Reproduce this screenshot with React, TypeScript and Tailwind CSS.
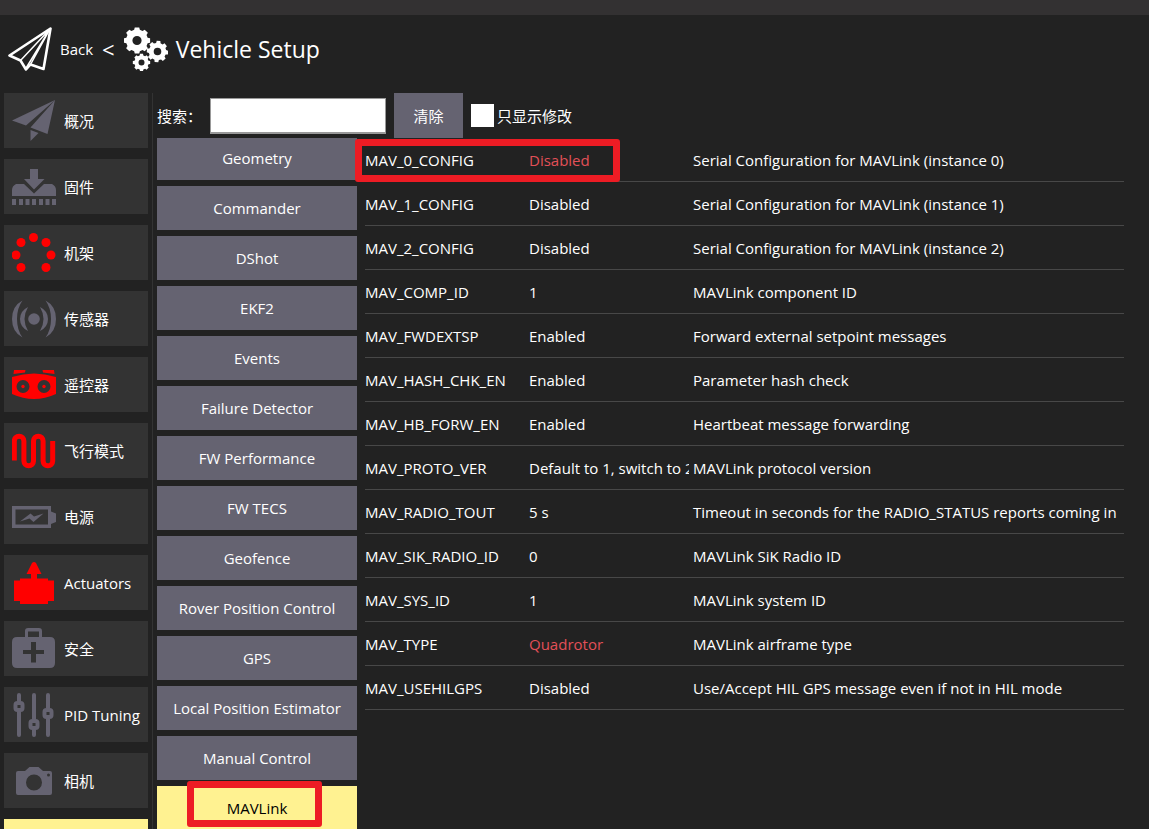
import React from "react";

const GREY = "#656371";
const RED = "#ff0000";

function gearPath(cx: number, cy: number, outer: number, inner: number, hole: number, turn: number) {
  const pts: string[] = [];
  for (let i = 0; i < 8; i++) {
    const steps: [number, number][] = [
      [-0.26, inner],
      [-0.17, outer],
      [0.17, outer],
      [0.26, inner],
    ];
    for (const [d, r] of steps) {
      const a = turn + (i * Math.PI) / 4 + d;
      pts.push(`${(cx + r * Math.cos(a)).toFixed(2)} ${(cy + r * Math.sin(a)).toFixed(2)}`);
    }
  }
  return `M${pts.join("L")}ZM${cx - hole} ${cy}a${hole} ${hole} 0 1 0 ${hole * 2} 0a${hole} ${hole} 0 1 0 ${-hole * 2} 0Z`;
}

function Icon({ children }: { children: React.ReactNode }) {
  return (
    <svg viewBox="0 0 44 44" className="size-11 shrink-0" aria-hidden="true">
      {children}
    </svg>
  );
}

const PlaneOutline = () => (
  <Icon>
    <g fill="none" stroke="#fff" strokeLinejoin="round">
      <path d="M42.5 1.5L1.5 28.5L12.5 33.5L18 42.5L22.5 37.5L35.5 42Z" strokeWidth="2.6" />
      <path d="M42 2L12.500 33.500M42 2L17.500 42M42 2L22.500 37.500" strokeWidth="1.5" />
    </g>
  </Icon>
);

const Gears = () => (
  <Icon>
    <g fill="#fff" fillRule="evenodd">
      <path d={gearPath(13, 13.5, 13.3, 11, 4.6, 0)} />
      <path d={gearPath(33.5, 24.5, 10.8, 8.7, 3.8, 0.1)} />
      <path d={gearPath(17.5, 35.5, 8.8, 7.2, 3, 0)} />
    </g>
  </Icon>
);

const icons: Record<string, React.ReactNode> = {
  summary: (
    <Icon>
      <path fill={GREY} d="M43 1L0 21.500L14 26.500ZM43 1L18.500 28.500L35.500 35ZM18.500 31L26.500 34L18.500 42Z" />
    </Icon>
  ),
  firmware: (
    <Icon>
      <path
        fill={GREY}
        d="M18 4h8v10h6.500L22 24.500L12 14h6ZM4 19h8l10 9.500L32 19h8q4 2 4 6v6H0v-6q0-4 4-6ZM0 34h4v6H0ZM7 34h4v6H7ZM13.500 34h4v6h-4ZM20 34h4v6h-4ZM27 34h4v6h-4ZM33.500 34h4v6h-4ZM40 34h4v6h-4Z"
      />
    </Icon>
  ),
  airframe: (
    <Icon>
      <g fill={RED}>
        <circle cx="21.5" cy="6.5" r="4.5" />
        <circle cx="9" cy="11.5" r="4.5" />
        <circle cx="34" cy="11.5" r="4.5" />
        <circle cx="4" cy="24" r="4.5" />
        <circle cx="39" cy="24" r="4.5" />
        <circle cx="9" cy="36.5" r="4.5" />
        <circle cx="34" cy="36.5" r="4.5" />
      </g>
    </Icon>
  ),
  sensors: (
    <Icon>
      <g fill={GREY}>
        <circle cx="22" cy="22" r="5.8" />
        <path d="M10.500 3.500Q0 9 0 22T10.500 40.500Q5 33 5 22T10.500 3.500ZM33.500 3.500Q44 9 44 22T33.500 40.500Q39 33 39 22T33.500 3.500ZM16 10Q8 14 8 22T16 34Q12.500 28 12.500 22T16 10ZM28 10Q36 14 36 22T28 34Q31.500 28 31.500 22T28 10Z" />
      </g>
    </Icon>
  ),
  radio: (
    <Icon>
      <g fill={RED}>
        <path d="M2 7h11.500l-.5 2.500L1.500 11ZM30.500 7H42l.5 4L31 9.500Z" />
        <path
          fillRule="evenodd"
          d="M0 14Q22 7 44 14V31Q22 41 0 31ZM4.500 23.500a6.500 6.500 0 1 0 13 0a6.500 6.500 0 1 0-13 0ZM25.500 23.500a6.500 6.500 0 1 0 13 0a6.500 6.500 0 1 0-13 0Z"
        />
        <circle cx="11" cy="23.5" r="1.7" />
        <circle cx="32" cy="23.5" r="1.7" />
      </g>
    </Icon>
  ),
  modes: (
    <Icon>
      <path
        d="M2.300 31.500V12a4.800 4.800 0 0 1 9.600 0V32a4.800 4.800 0 0 0 9.600 0V12a4.800 4.800 0 0 1 9.600 0V32a4.800 4.800 0 0 0 9.600 0V12"
        fill="none"
        stroke={RED}
        strokeWidth="5"
      />
    </Icon>
  ),
  power: (
    <Icon>
      <g fill={GREY}>
        <path fillRule="evenodd" d="M0 11H39V16.500L44 18.500V27L39 29V33H0ZM3.500 14.500V29.500H36V14.500Z" />
        <path d="M8 26.500L18.500 18.500L22 21.500L31.500 18.500L21.500 27L17.500 23.500Z" />
      </g>
    </Icon>
  ),
  actuators: (
    <Icon>
      <path
        fill={RED}
        d="M20 2q2-2 4 0L29.500 13H25v4.500H36V19.500h6V40H36V43H8V40H2V19.500H8V17.500H19V13H14.500Z"
      />
    </Icon>
  ),
  safety: (
    <Icon>
      <path
        fill={GREY}
        fillRule="evenodd"
        d="M13 10V4q0-3 3-3H27q3 0 3 3V10h8q5 0 5 5V36q0 5-5 5H5q-5 0-5-5V15q0-5 5-5ZM16 10H27V4.500H16ZM19 15V23H11V27H19V35.500H24V27H32V23H24V15Z"
      />
    </Icon>
  ),
  tuning: (
    <Icon>
      <g fill="none" stroke={GREY} strokeWidth="4" strokeLinecap="round">
        <path d="M7 2V8M7 19V42M22 2V26M22 37V42M36 2V15M36 26V42" />
        <rect x="3.5" y="10" width="7" height="7" rx="2" />
        <rect x="18.5" y="28" width="7" height="7" rx="2" />
        <rect x="32.5" y="17" width="7" height="7" rx="2" />
      </g>
    </Icon>
  ),
  camera: (
    <Icon>
      <path
        fill={GREY}
        fillRule="evenodd"
        d="M6 12H13L17.500 8H26.500L31 12H38q2 0 2 2V34q0 2-2 2H6q-2 0-2-2V14q0-2 2-2ZM14 23.500a8 8 0 1 0 16 0a8 8 0 1 0-16 0ZM35 16a1.500 1.500 0 1 0 3 0a1.500 1.500 0 1 0-3 0Z"
      />
    </Icon>
  ),
};

const sections = [
  { icon: "summary", label: "概况" },
  { icon: "firmware", label: "固件" },
  { icon: "airframe", label: "机架" },
  { icon: "sensors", label: "传感器" },
  { icon: "radio", label: "遥控器" },
  { icon: "modes", label: "飞行模式" },
  { icon: "power", label: "电源" },
  { icon: "actuators", label: "Actuators" },
  { icon: "safety", label: "安全" },
  { icon: "tuning", label: "PID Tuning" },
  { icon: "camera", label: "相机" },
];

const groups = [
  "Geometry",
  "Commander",
  "DShot",
  "EKF2",
  "Events",
  "Failure Detector",
  "FW Performance",
  "FW TECS",
  "Geofence",
  "Rover Position Control",
  "GPS",
  "Local Position Estimator",
  "Manual Control",
];

const parameters = [
  { name: "MAV_0_CONFIG", value: "Disabled", modified: true, marked: true, info: "Serial Configuration for MAVLink (instance 0)" },
  { name: "MAV_1_CONFIG", value: "Disabled", info: "Serial Configuration for MAVLink (instance 1)" },
  { name: "MAV_2_CONFIG", value: "Disabled", info: "Serial Configuration for MAVLink (instance 2)" },
  { name: "MAV_COMP_ID", value: "1", info: "MAVLink component ID" },
  { name: "MAV_FWDEXTSP", value: "Enabled", info: "Forward external setpoint messages" },
  { name: "MAV_HASH_CHK_EN", value: "Enabled", info: "Parameter hash check" },
  { name: "MAV_HB_FORW_EN", value: "Enabled", info: "Heartbeat message forwarding" },
  { name: "MAV_PROTO_VER", value: "Default to 1, switch to 2", info: "MAVLink protocol version" },
  { name: "MAV_RADIO_TOUT", value: "5 s", info: "Timeout in seconds for the RADIO_STATUS reports coming in" },
  { name: "MAV_SIK_RADIO_ID", value: "0", info: "MAVLink SiK Radio ID" },
  { name: "MAV_SYS_ID", value: "1", info: "MAVLink system ID" },
  { name: "MAV_TYPE", value: "Quadrotor", modified: true, info: "MAVLink airframe type" },
  { name: "MAV_USEHILGPS", value: "Disabled", info: "Use/Accept HIL GPS message even if not in HIL mode" },
];

export default function App() {
  return (
    <div className="flex h-screen flex-col overflow-hidden bg-[#222222] font-['Open_Sans','Noto_Sans_CJK_SC',sans-serif] text-[15px] leading-5 text-white">
      <div className="h-[15px] shrink-0 bg-[#333132]" />
      <header className="flex h-[74px] shrink-0 items-center px-2 pb-1.5">
        <a href="#" className="flex items-center gap-2">
          <PlaneOutline />
          <span>Back</span>
        </a>
        <span className="mx-[9px] text-[22px]">&lt;</span>
        <Gears />
        <h1 className="ml-2 text-[23px] leading-8">Vehicle Setup</h1>
      </header>

      <div className="flex min-h-0 flex-1 pt-1">
        <nav className="flex w-[152px] shrink-0 flex-col gap-[11px] overflow-hidden px-1">
          {sections.map((s) => (
            <button key={s.label} type="button" className="flex h-[55px] shrink-0 items-center gap-2 bg-[#333333] px-2 text-left whitespace-nowrap">
              {icons[s.icon]}
              <span>{s.label}</span>
            </button>
          ))}
          <button type="button" aria-label="Parameters" className="h-[55px] shrink-0 bg-[#fff291]" />
        </nav>

        <main className="flex min-w-0 flex-1 flex-col border-l border-[#333333] pl-1">
          <div className="flex h-[45px] shrink-0 items-center">
            <label htmlFor="search" className="w-[53px]">搜索：</label>
            <input id="search" type="text" className="h-9 w-44 border border-b-2 border-[#999999] bg-white px-2 text-black" />
            <button type="button" className="ml-2 h-[45px] w-[69px] bg-[#656371]">清除</button>
            <label className="ml-2 flex items-center gap-[3px]">
              <input type="checkbox" className="size-[23px] appearance-none bg-white" />
              只显示修改
            </label>
          </div>

          <div className="flex min-h-0 flex-1">
            <div className="w-[200px] shrink-0 overflow-hidden">
              <div className="-mt-0.5 flex flex-col gap-1.5">
                {groups.map((g) => (
                  <button key={g} type="button" className="h-11 shrink-0 bg-[#656371]">{g}</button>
                ))}
                <button type="button" className="relative h-11 shrink-0 bg-[#fff291] text-black">
                  MAVLink
                  <span className="absolute -top-[5px] left-[30px] h-[46px] w-[135px] rounded-[3px] border-[7px] border-[#ed1c24]" />
                </button>
              </div>
            </div>

            <div className="min-w-0 flex-1 pr-[25px] pl-2">
              <table className="w-full table-fixed border-separate border-spacing-0 text-left whitespace-nowrap">
                <colgroup>
                  <col className="w-[164px]" />
                  <col className="w-[164px]" />
                  <col />
                </colgroup>
                <tbody>
                  {parameters.map((p) => (
                    <tr key={p.name} className="h-11">
                      <td className="relative border-b border-[#484848] p-0">
                        {p.name}
                        {p.marked && (
                          <span className="absolute top-px -left-[10px] h-[43px] w-[265px] rounded-[3px] border-[7px] border-[#ed1c24]" />
                        )}
                      </td>
                      <td className="border-b border-[#484848] p-0 pr-1">
                        <div className={p.modified ? "overflow-hidden text-[#e25058]" : "overflow-hidden"}>{p.value}</div>
                      </td>
                      <td className="border-b border-[#484848] p-0">{p.info}</td>
                    </tr>
                  ))}
                </tbody>
              </table>
            </div>
          </div>
        </main>
      </div>
    </div>
  );
}
